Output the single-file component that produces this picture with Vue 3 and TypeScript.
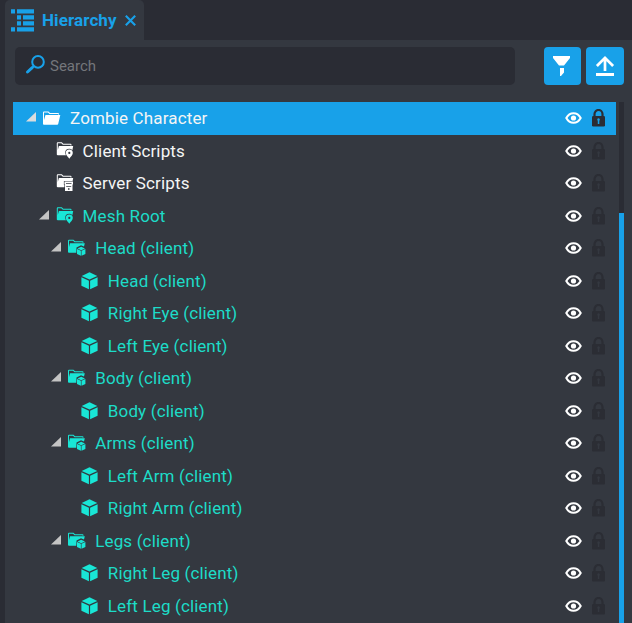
<script setup lang="ts">
type Icon = 'folder' | 'pin' | 'server' | 'group' | 'cube'

interface TreeNode {
  name: string
  depth: number
  icon: Icon
  open?: boolean
  client?: boolean
  selected?: boolean
}

const nodes: TreeNode[] = [
  { name: 'Zombie Character', depth: 0, icon: 'folder', open: true, selected: true },
  { name: 'Client Scripts', depth: 1, icon: 'pin' },
  { name: 'Server Scripts', depth: 1, icon: 'server' },
  { name: 'Mesh Root', depth: 1, icon: 'pin', open: true, client: true },
  { name: 'Head (client)', depth: 2, icon: 'group', open: true, client: true },
  { name: 'Head (client)', depth: 3, icon: 'cube', client: true },
  { name: 'Right Eye (client)', depth: 3, icon: 'cube', client: true },
  { name: 'Left Eye (client)', depth: 3, icon: 'cube', client: true },
  { name: 'Body (client)', depth: 2, icon: 'group', open: true, client: true },
  { name: 'Body (client)', depth: 3, icon: 'cube', client: true },
  { name: 'Arms (client)', depth: 2, icon: 'group', open: true, client: true },
  { name: 'Left Arm (client)', depth: 3, icon: 'cube', client: true },
  { name: 'Right Arm (client)', depth: 3, icon: 'cube', client: true },
  { name: 'Legs (client)', depth: 2, icon: 'group', open: true, client: true },
  { name: 'Right Leg (client)', depth: 3, icon: 'cube', client: true },
  { name: 'Left Leg (client)', depth: 3, icon: 'cube', client: true },
]
</script>

<template>
  <div class="window">
    <header class="tabs">
      <div class="tab">
        <svg class="tab-icon" width="23" height="23" viewBox="0 0 23 23">
          <path d="M0 .2h4v4.200H0zM6 .2h17v4.200H6zM6 6.200h4v4.200H6zM12 6.200h11v4.200H12zM6 12.300h4v4.200H6zM12 12.300h11v4.200H12zM0 18.300h4v4.200H0zM6 18.300h17v4.200H6z" />
        </svg>
        <span class="tab-title">Hierarchy</span>
        <svg class="close" width="11" height="11" viewBox="0 0 11 11">
          <path d="M.8.8l9.4 9.4M10.200.8L.8 10.200" />
        </svg>
      </div>
    </header>
    <main class="panel">
      <div class="toolbar">
        <div class="search">
          <svg width="22" height="20" viewBox="0 0 22 20">
            <circle cx="14" cy="6.900" r="5.800" />
            <path d="M10 11L8.500 12.500" />
            <path class="handle" d="M8.200 12.600L3.500 17" />
          </svg>
          <span>Search</span>
        </div>
        <button class="tool filter" aria-label="Filter">
          <svg width="38" height="38" viewBox="0 0 38 38">
            <path d="M9 9h17v2l-6 7.500h-5L9 11zM16 21h4v4.500l-3 3.500h-1z" />
          </svg>
        </button>
        <button class="tool" aria-label="Upload">
          <svg width="38" height="38" viewBox="0 0 38 38">
            <path d="M10 26h18v3H10z" />
            <path class="stroke" d="M19 24V11M10.900 19l8.100-8.100 8.100 8.100" />
          </svg>
        </button>
      </div>
      <div class="content">
        <div class="tree">
          <div
            v-for="(node, i) in nodes"
            :key="i"
            class="row"
            :class="{ selected: node.selected, client: node.client }"
          >
            <span class="indent" :style="{ width: node.depth * 12.6 + 'px' }"></span>
            <span class="arrow">
              <svg v-if="node.open" width="10" height="10" viewBox="0 0 10 10">
                <path d="M10 0v9.500H0z" />
              </svg>
            </span>
            <svg class="icon" width="19" height="20" viewBox="0 0 19 20">
              <template v-if="node.icon === 'folder'">
                <path d="M0 16V4.500q0-1 1-1h4.500l1.500 1.500h8q1 0 1 1v.400h-1V6H6.500L5 4.500H1V12L2.500 6.900H17.300L15.200 16q-.2.800-1 .800H.9Q0 16.800 0 16z" />
              </template>
              <template v-else-if="node.icon === 'cube'">
                <path d="M8.500 1.200l7.800 3.700-7.800 3.600L.7 4.900zM.4 6.200L7.900 9.700v8.600L.4 14.700zM16.600 6.200L9.100 9.700v8.600l7.500-3.600z" />
              </template>
              <template v-else-if="node.icon === 'group'">
                <path d="M0 14V2.800q0-1 1-1h4.500L7 3.300h7.500q1 0 1 1v.500h-1v-.500H6.500L5 2.800H1V9L2 5.200H16.800L16 8.500 13 7.200 8.500 9.400 8.300 14.800H1q-1 0-1-.8z" />
                <path d="M13.200 8.700l3.800 1.700-3.800 1.800-3.800-1.800zM9 11l3.900 1.800v5l-3.900-1.800zM17.400 11l-3.900 1.800v5l3.900-1.800z" />
              </template>
              <template v-else>
                <path d="M.8 13.500V2.300q0-1 1-1h4L7.300 2.800H14.500q1 0 1 1v.600h-1v-.600H6.800L5.300 2.300H1.800V9L2.900 4.900H17.200L16.300 9.500h-5.800v4.800h-8.700q-1 0-1-.8z" />
                <path
                  v-if="node.icon === 'pin'"
                  class="badge"
                  fill-rule="evenodd"
                  d="M13.300 8.400a3.500 3.500 0 0 1 3.500 3.500c0 2.200-2.200 3.600-3.500 5.900-1.300-2.300-3.500-3.700-3.500-5.900a3.500 3.500 0 0 1 3.500-3.500zm0 2.400a1.100 1.100 0 1 0 0 2.200 1.100 1.100 0 0 0 0-2.200z"
                />
                <template v-else>
                  <path class="badge" d="M8.500 8.500H17v3h-.5V18H9v-6.500h-.5z" />
                  <path class="slot" d="M10 10.200h5.500v.700H10zM10.200 13h5v.700h-5zM12 15.200h1.500v1.500H12z" />
                </template>
              </template>
            </svg>
            <span class="name">{{ node.name }}</span>
            <svg class="eye" width="17" height="12" viewBox="0 0 17 12">
              <path d="M1.300 6C3.100 2.600 5.500 1.200 8.500 1.200S13.900 2.600 15.700 6C13.900 9.400 11.500 10.800 8.500 10.800S3.100 9.400 1.300 6z" />
              <circle cx="8.500" cy="6" r="2.600" />
            </svg>
            <svg class="lock" width="13" height="18" viewBox="0 0 13 18">
              <path class="shackle" d="M2.500 8V5a4 4 0 0 1 8 0v3" />
              <rect y="7" width="13" height="10.500" rx="1.300" />
              <path class="keyhole" d="M6.500 9.300a1.400 1.400 0 0 1 .8 2.500v3.200H5.800v-3.200a1.400 1.400 0 0 1 .7-2.500z" />
            </svg>
          </div>
        </div>
        <div class="scrollbar"><div class="thumb"></div></div>
      </div>
    </main>
  </div>
</template>

<style>
body {
  margin: 0;
  overflow: hidden;
}
</style>

<style scoped>
.window {
  box-sizing: border-box;
  width: 632px;
  height: 623px;
  padding-left: 5px;
  overflow: hidden;
  display: flex;
  flex-direction: column;
  background: #2a2c34;
  font-family: Roboto, 'Liberation Sans', sans-serif;
}
.tabs {
  height: 40px;
  flex: none;
  display: flex;
}
.tab {
  box-sizing: border-box;
  width: 139px;
  padding-left: 6px;
  display: flex;
  align-items: center;
  background: #343840;
  border-radius: 5px 5px 0 0;
}
.tab-icon {
  fill: #18a1e9;
}
.tab-title {
  width: 75px;
  margin: 0 8px;
  color: #18a1e9;
  font-size: 17px;
  font-weight: 700;
  letter-spacing: 0.1px;
  white-space: nowrap;
}
.close {
  fill: none;
  stroke: #18a1e9;
  stroke-width: 2.1;
}
.panel {
  flex: 1;
  min-height: 0;
  display: flex;
  flex-direction: column;
  background: #343840;
}
.toolbar {
  display: flex;
  padding: 7px 0 0 10px;
  height: 55px;
}
.search {
  box-sizing: border-box;
  width: 500px;
  height: 38px;
  margin-right: 29px;
  padding-left: 9px;
  display: flex;
  align-items: center;
  gap: 4px;
  border-radius: 5px;
  background: #2a2c34;
  color: #74767b;
  font-size: 15px;
}
.search svg {
  fill: none;
  stroke: #18a1e9;
  stroke-width: 2;
  margin-top: -2px;
}
.search .handle {
  stroke-width: 3;
  stroke-linecap: round;
}
.tool {
  width: 38px;
  height: 38px;
  padding: 0;
  border: 0;
  border-radius: 4px;
  background: #18a1e9;
  fill: #fff;
}
.tool.filter {
  width: 37px;
  margin-right: 5px;
}
.tool svg {
  display: block;
}
.tool .stroke {
  fill: none;
  stroke: #fff;
  stroke-width: 2.7;
}
.content {
  flex: 1;
  min-height: 0;
  display: flex;
  padding-left: 8px;
}
.tree {
  width: 603px;
  margin-right: 3px;
}
.row {
  box-sizing: border-box;
  height: 32.5px;
  padding: 0 11px 0 13px;
  display: flex;
  align-items: center;
  color: #f4f5f5;
  fill: #fff;
}
.row.client {
  color: #1ddcc8;
  fill: #19e6d6;
}
.row.selected {
  background: #18a1e9;
}
.indent {
  flex: none;
}
.arrow {
  width: 17px;
  height: 12px;
  flex: none;
  fill: #c4c4c4;
}
.arrow svg {
  display: block;
}
.selected .arrow {
  fill: #d9dcde;
}
.icon {
  width: 19px;
  margin-right: 8px;
  flex: none;
}
.icon .badge {
  stroke: #343840;
  stroke-width: 1.2;
  paint-order: stroke;
}
.icon .slot {
  fill: #343840;
}
.name {
  flex: 1;
  font-size: 17px;
  letter-spacing: 0.15px;
  line-height: 32px;
  white-space: nowrap;
}
.eye {
  fill: #fff;
  margin-right: 10px;
}
.eye path {
  fill: none;
  stroke: #fff;
  stroke-width: 2;
}
.lock {
  fill: #2b2d34;
}
.lock .shackle {
  fill: none;
  stroke: #2b2d34;
  stroke-width: 2.2;
}
.lock .keyhole {
  fill: #343840;
}
.selected .keyhole {
  fill: #18a1e9;
}
.scrollbar {
  width: 5px;
  background: #2a2c34;
}
.thumb {
  height: 420px;
  margin-top: 111px;
  background: #18a1e9;
}
</style>
